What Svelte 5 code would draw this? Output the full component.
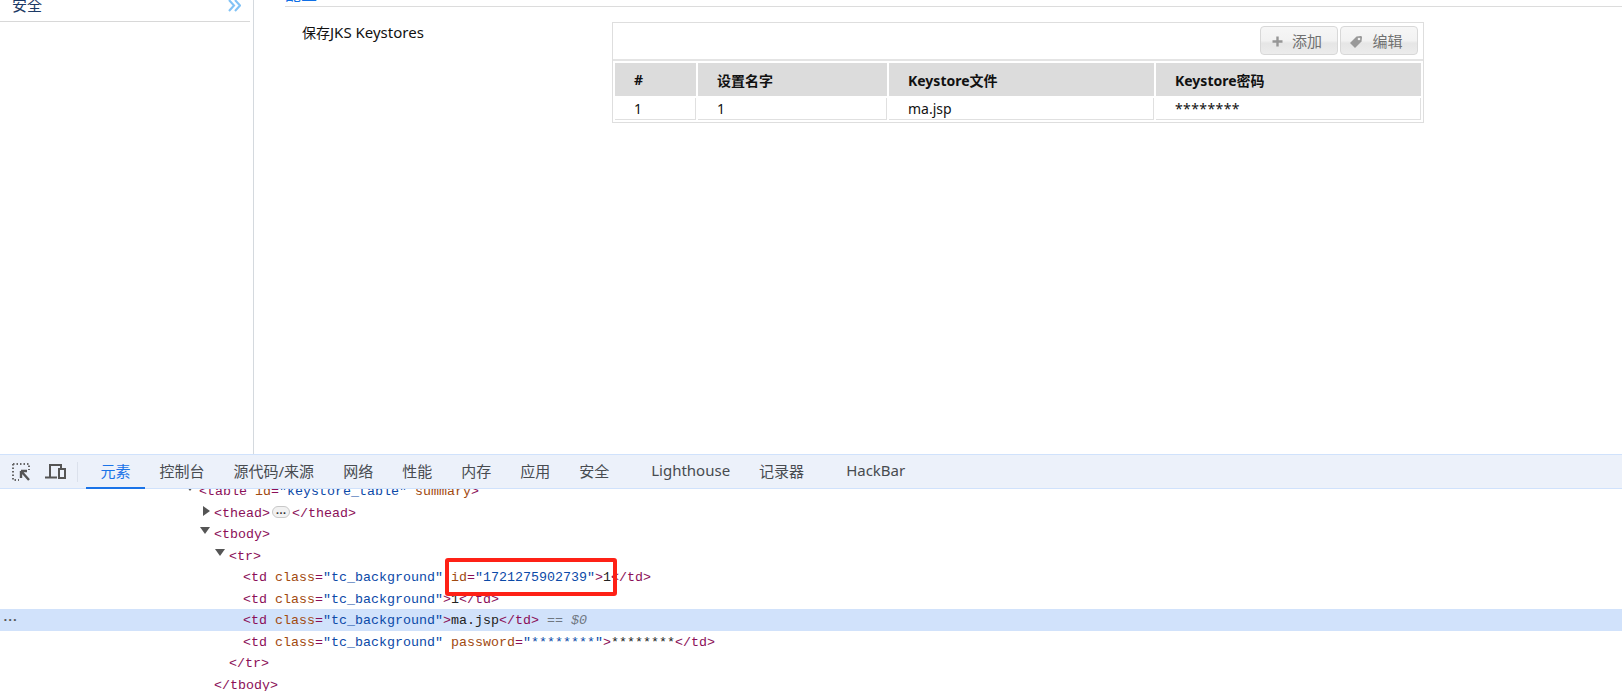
<script>
  const tabs = [
    { t: '元素', active: true },
    { t: '控制台' },
    { t: '源代码/来源' },
    { t: '网络' },
    { t: '性能' },
    { t: '内存' },
    { t: '应用' },
    { t: '安全' },
    { t: 'Lighthouse', wide: true },
    { t: '记录器' },
    { t: 'HackBar', wide: true }
  ];
</script>

<div class="page">
  <div class="top">
    <aside class="sidebar">
      <div class="side-item">
        <span>安全</span>
        <svg class="chev" width="13" height="13" viewBox="0 0 13 13" fill="none" stroke="#82c3f6" stroke-width="2.1">
          <path d="M1 1l5 5.500-5 5.500M7 1l5 5.500-5 5.500" />
        </svg>
      </div>
    </aside>
    <main class="main">
      <div class="section-head"><span>配置</span></div>
      <div class="field">
        <div class="label">保存<span class="latin">JKS Keystores</span></div>
        <div class="panel">
          <div class="tools">
            <button class="btn">
              <svg class="plus" width="11" height="11" viewBox="0 0 11 11"><path d="M4.300 .5h2.400v3.800h3.800v2.400H6.700v3.800H4.300V6.700H.5V4.300h3.800z" fill="#969696" /></svg>
              <span>添加</span>
            </button>
            <button class="btn">
              <svg class="tag" width="14" height="14" viewBox="0 0 14 14"><path d="M7.500 1.500l4-.5c1 0 1.500.5 1.500 1.500l-.5 4-6.500 6.500L1 8z" fill="#999" /><circle cx="10" cy="4" r="1.300" fill="#eee" /></svg>
              <span>编辑</span>
            </button>
          </div>
          <table>
            <thead>
              <tr><th class="c1">#</th><th class="c2">设置名字</th><th class="c3">Keystore文件</th><th class="c4">Keystore密码</th></tr>
            </thead>
            <tbody>
              <tr><td>1</td><td>1</td><td>ma.jsp</td><td class="stars">********</td></tr>
            </tbody>
          </table>
        </div>
      </div>
    </main>
  </div>

  <section class="devtools">
    <div class="dt-bar">
      <svg class="ic1" width="18" height="18" viewBox="0 0 18 18" fill="none">
        <path d="M1 1h16v6M1 1v16h6" stroke="#666" stroke-width="2" stroke-dasharray="1.500 2" />
        <path d="M9 8l8 9M9 8h6M9 8v7" stroke="#555" stroke-width="2.400" />
      </svg>
      <svg class="ic2" width="21" height="15" viewBox="0 0 21 15" fill="none">
        <path d="M5 13V1h11v3" stroke="#555" stroke-width="2" />
        <path d="M0 13.500h12" stroke="#555" stroke-width="2" />
        <rect x="14" y="5" width="6" height="9" stroke="#555" stroke-width="2" />
      </svg>
      <i class="sep"></i>
      <div class="tabs">
        {#each tabs as tab}
          <div class="tab" class:active={tab.active} class:wide={tab.wide}>{tab.t}</div>
        {/each}
      </div>
    </div>

    <div class="tree">
      <div class="tree-inner">
        <div class="row in1"><b class="tri down small"></b><span class="tg">&lt;table</span> <span class="an">id</span><span class="tg">=</span><span class="av">"keystore_table"</span> <span class="an">summary</span><span class="tg">&gt;</span></div>
        <div class="row in2"><b class="tri right"></b><span class="tg">&lt;thead&gt;</span><em class="more">…</em><span class="tg">&lt;/thead&gt;</span></div>
        <div class="row in2"><b class="tri down"></b><span class="tg">&lt;tbody&gt;</span></div>
        <div class="row in3"><b class="tri down"></b><span class="tg">&lt;tr&gt;</span></div>
        <div class="row in4"><span class="tg">&lt;td</span> <span class="an">class</span><span class="tg">=</span><span class="av">"tc_background"</span> <span class="an">id</span><span class="tg">=</span><span class="av">"1721275902739"</span><span class="tg">&gt;</span>1<span class="tg">&lt;/td&gt;</span></div>
        <div class="row in4"><span class="tg">&lt;td</span> <span class="an">class</span><span class="tg">=</span><span class="av">"tc_background"</span><span class="tg">&gt;</span>1<span class="tg">&lt;/td&gt;</span></div>
        <div class="row in4 sel"><span class="dots">•••</span><span class="tg">&lt;td</span> <span class="an">class</span><span class="tg">=</span><span class="av">"tc_background"</span><span class="tg">&gt;</span>ma.jsp<span class="tg">&lt;/td&gt;</span> <i class="eq">== $0</i></div>
        <div class="row in4"><span class="tg">&lt;td</span> <span class="an">class</span><span class="tg">=</span><span class="av">"tc_background"</span> <span class="an">password</span><span class="tg">=</span><span class="av">"********"</span><span class="tg">&gt;</span>********<span class="tg">&lt;/td&gt;</span></div>
        <div class="row in3"><span class="tg">&lt;/tr&gt;</span></div>
        <div class="row in2"><span class="tg">&lt;/tbody&gt;</span></div>
      </div>
      <div class="redbox"></div>
    </div>
  </section>
</div>

<style>
  :global(body) { margin: 0; background: #fff; overflow: hidden; }
  .page { width: 1622px; height: 691px; display: flex; flex-direction: column; overflow: hidden; font-family: "Noto Sans", "Noto Sans CJK SC", sans-serif; }
  .top { height: 454px; display: flex; }
  .sidebar { width: 253px; border-right: 1px solid #d4d9de; }
  .side-item { width: 250px; height: 21px; border-bottom: 1px solid #d8d8d8; display: flex; justify-content: space-between; align-items: center; overflow: hidden; font-size: 15px; color: #1c3a66; }
  .side-item span { margin: -12px 0 0 12px; }
  .chev { margin: -11px 9px 0 0; }
  .main { flex: 1; padding-left: 31px; min-width: 0; }
  .section-head { height: 6px; border-bottom: 1px solid #dcdcdc; overflow: hidden; font-size: 16px; color: #0f6fe6; }
  .section-head span { display: block; margin-top: -18px; line-height: 24px; }
  .field { display: flex; padding: 15px 0 0 17px; }
  .label { width: 310px; font-size: 14px; line-height: 20px; color: #111; }
  .latin { font-size: 15px; }
  .panel { width: 810px; border: 1px solid #dedede; }
  .tools { height: 38px; border-bottom: 2px solid #e4e4e4; box-sizing: border-box; display: flex; justify-content: flex-end; gap: 2px; padding: 3px 5px 0 0; }
  .btn { width: 78px; height: 29px; border: 1px solid #d8d8d8; border-radius: 4px; background: linear-gradient(#f6f6f6 0%, #f2f2f2 50%, #e6e6e6 60%, #ececec 100%); display: flex; align-items: center; justify-content: center; gap: 9px; padding: 0 4px 0 0; font: 15px "Noto Sans CJK SC", sans-serif; color: #707070; }
  .plus { margin-top: 2px; }
  .tag { margin-top: 2px; margin-left: -2px; }
  table { border-collapse: separate; border-spacing: 2px; table-layout: fixed; width: 810px; font-size: 14px; color: #111; }
  th { background: #dcdcdc; height: 33px; padding: 0 0 0 19px; text-align: left; font-weight: 700; box-sizing: border-box; color: #111; }
  .c1 { width: 81px; } .c2 { width: 189px; } .c3 { width: 265px; } .c4 { width: 265px; }
  td { height: 22px; padding: 0 0 0 19px; border-right: 1px solid #e0e0e0; border-bottom: 1px solid #e0e0e0; box-sizing: border-box; line-height: 20px; }
  .stars { letter-spacing: .4px; }
  .devtools { flex: 1; display: flex; flex-direction: column; min-height: 0; position: relative; }
  .dt-bar { height: 35px; flex: none; background: #ecf1fa; border-top: 1px solid #d0e2fc; border-bottom: 1px solid #d0e2fc; box-sizing: border-box; display: flex; align-items: center; position: relative; z-index: 2; }
  .ic1 { margin-left: 12px; }
  .ic2 { margin-left: 15px; }
  .sep { width: 1px; height: 20px; background: #dbe1ec; margin-left: 11px; }
  .tabs { display: flex; margin-left: 8px; height: 100%; }
  .tab { font-size: 15px; color: #474b50; display: flex; align-items: center; padding: 0 14.5px 3px; box-sizing: border-box; white-space: nowrap; }
  .tab.wide { margin-left: 13px; }
  .tab.active { color: #1a73e8; border-bottom: 2px solid #1a73e8; margin-bottom: -1px; padding-bottom: 2px; }
  .tree { flex: 1; position: relative; overflow: hidden; font-family: "Liberation Mono", monospace; font-size: 13.33px; color: #222; }
  .tree-inner { margin-top: -9px; }
  .row { height: 21.5px; line-height: 23.6px; white-space: pre; position: relative; }
  .in1 { padding-left: 199px; } .in2 { padding-left: 214px; } .in3 { padding-left: 229px; } .in4 { padding-left: 243px; }
  .tg { color: #8b0f58; }
  .an { color: #a14a10; }
  .av { color: #0b4aa8; }
  .sel { background: #d1e2fb; }
  .eq { color: #6f7680; font-style: italic; }
  .dots { position: absolute; left: 3px; top: 0; font-size: 8px; line-height: 21.5px; color: #555; }
  .tri { position: absolute; width: 0; height: 0; }
  .tri.right { left: 203px; top: 4px; border-left: 7px solid #555; border-top: 5px solid transparent; border-bottom: 5px solid transparent; }
  .tri.down { border-top: 7px solid #555; border-left: 5px solid transparent; border-right: 5px solid transparent; top: 4px; }
  .in2 .tri.down { left: 200px; }
  .in3 .tri.down { left: 215px; }
  .in1 .tri.down { left: 187px; top: 7px; border-left-width: 3px; border-right-width: 3px; border-top-width: 4px; }
  .more { display: inline-block; width: 16px; height: 10px; line-height: 6px; margin: 0 2px; border: 1px solid #c8c8c8; border-radius: 6px; background: #f1f1f1; font-style: normal; font-size: 11px; color: #333; text-align: center; vertical-align: -1px; overflow: hidden; font-family: "Liberation Sans", sans-serif; font-weight: 700; }
  .redbox { position: absolute; left: 445px; top: 69px; width: 172px; height: 38px; border: 4px solid #fe2116; border-radius: 3px; box-sizing: border-box; }
</style>
